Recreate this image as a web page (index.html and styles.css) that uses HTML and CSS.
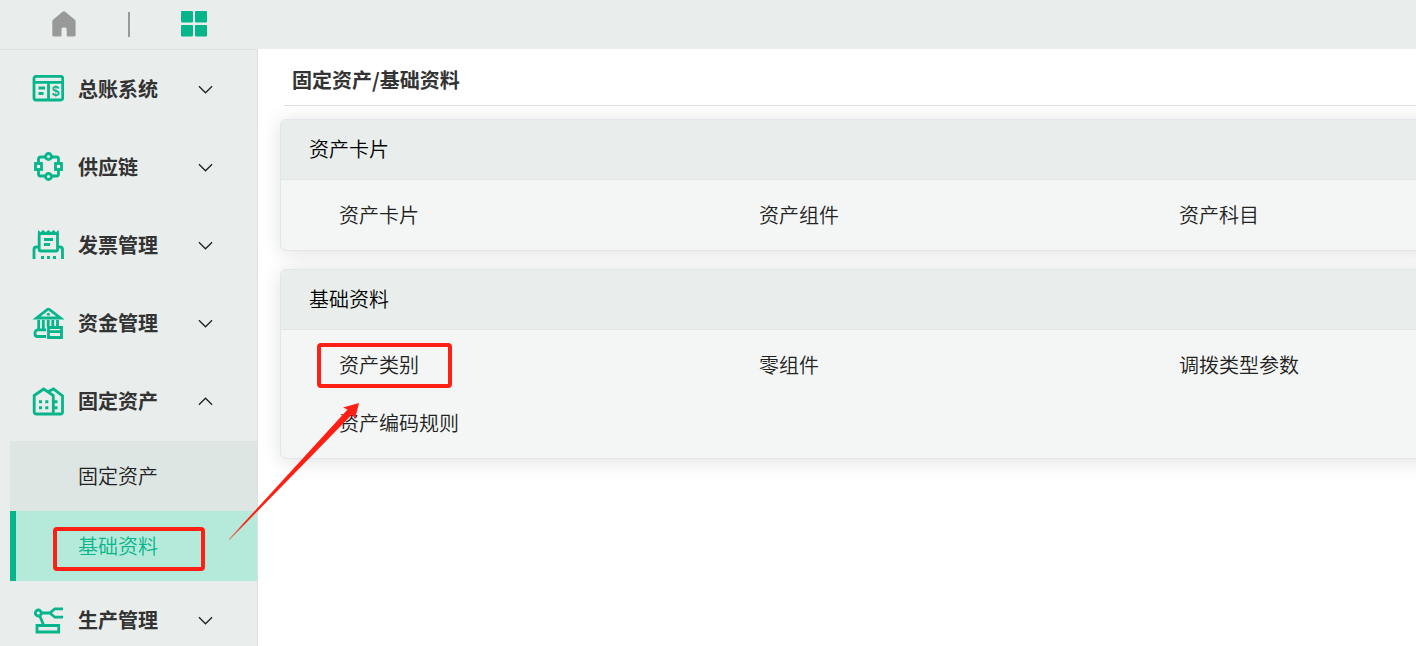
FILE: index.html
```html
<!DOCTYPE html>
<html lang="zh-CN">
<head>
    <meta charset="UTF-8">
    <meta name="viewport" content="width=device-width, initial-scale=1.0">
    <title>固定资产/基础资料</title>
    <link rel="stylesheet" href="styles.css">
</head>
<body>

<header class="topbar">
    <button class="top-btn" aria-label="首页">
        <svg width="26" height="26" viewBox="0 0 26 26"><path fill="#999" d="M11.6 .8a2 2 0 0 1 2.6 0L23.600 8.400a2.500 2.500 0 0 1 1 2V24a1.600 1.600 0 0 1-1.600 1.600H17a1.300 1.300 0 0 1-1.300-1.300V18a1.500 1.500 0 0 0-1.500-1.500h-2.200a1.500 1.500 0 0 0-1.500 1.500v6.300a1.300 1.300 0 0 1-1.300 1.300H2.900A1.600 1.600 0 0 1 1.300 24V10.400a2.500 2.500 0 0 1 1-2z"/></svg>
    </button>
    <span class="divider"></span>
    <button class="top-btn" aria-label="应用">
        <svg width="26" height="26" viewBox="0 0 26 26" fill="#07b58a"><rect width="12" height="11.500" rx="1"/><rect x="14" width="12" height="11.500" rx="1"/><rect y="14" width="12" height="11.500" rx="1"/><rect x="14" y="14" width="12" height="11.500" rx="1"/></svg>
    </button>
</header>

<div class="layout">
    <nav class="sidebar">
        <button class="menu-item">
            <svg class="icon" viewBox="0 0 32 32"><rect x="2" y="3.300" width="28.700" height="23.700" rx="2"/><path d="M2 9.300h29M16.500 9.300V27M6.500 15h6.500M6.500 20.500h5"/><text x="23.700" y="23">$</text></svg>
            <span class="menu-text">总账系统</span>
            <svg class="chevron" viewBox="0 0 16 16"><path d="M1 4.500l7 7 7-7"/></svg>
        </button>
        <button class="menu-item">
            <svg class="icon" viewBox="0 0 32 32"><path d="M13 6H8.500a2 2 0 0 0-2 2v4M20 6h4.500a2 2 0 0 1 2 2v4M6.500 19v4a2 2 0 0 0 2 2H13M26.500 19v4a2 2 0 0 1-2 2H20"/><circle cx="16.500" cy="5.500" r="3"/><circle cx="16.500" cy="25.500" r="3"/><rect x="3.500" y="12.500" width="6" height="6"/><rect x="23.500" y="12.500" width="6" height="6"/></svg>
            <span class="menu-text">供应链</span>
            <svg class="chevron" viewBox="0 0 16 16"><path d="M1 4.500l7 7 7-7"/></svg>
        </button>
        <button class="menu-item">
            <svg class="icon" viewBox="0 0 32 32"><path class="solid" d="M6 1l2.600 2.200L11 1l2.800 2.200L16.300 1l2.700 2.200L21.600 1l2.400 2.200L26.700 1v5H6z"/><path d="M7.200 4v16.500a1.500 1.500 0 0 0 1.500 1.500H24a1.500 1.500 0 0 0 1.500-1.500V4M12 10.500h9M12 15.500h6M7 18H4.500a2.500 2.500 0 0 0-2.500 2.500V30M25.500 18H28a2.500 2.500 0 0 1 2.500 2.500V30M9 28.500h3M15 28.500h3M21 28.500h3"/></svg>
            <span class="menu-text">发票管理</span>
            <svg class="chevron" viewBox="0 0 16 16"><path d="M1 4.500l7 7 7-7"/></svg>
        </button>
        <button class="menu-item">
            <svg class="icon" viewBox="0 0 32 32"><path d="M4.500 11L15.500 2.500a1.500 1.500 0 0 1 1.700 0L28.500 11z"/><circle class="solid" cx="16.400" cy="7.300" r="1.500"/><path d="M6.700 13v9M11.300 13v9M16.200 13v7M20.800 13v6M25.500 13v6M14 22.800H6a3 3 0 0 0-3 3V27a2.500 2.500 0 0 0 2.500 2.500H14"/><path d="M16.500 20.500h13v10h-13zM16.500 24.700h13"/></svg>
            <span class="menu-text">资金管理</span>
            <svg class="chevron" viewBox="0 0 16 16"><path d="M1 4.500l7 7 7-7"/></svg>
        </button>
        <button class="menu-item">
            <svg class="icon" viewBox="0 0 32 32"><path d="M2.200 10.500L11.700 4l9.600 6.500V29H4.200a2 2 0 0 1-2-2zM16.500 6.500L21.500 4l9 7v16a2 2 0 0 1-2 2H21.300"/><path class="solid" d="M7 15.200h3v3H7zM13.300 15.200h3v3h-3zM7 21.200h3v3H7zM13.300 21.200h3v3h-3zM22 15.200h3.500v3H22zM22 21.200h3.500v3H22z"/></svg>
            <span class="menu-text">固定资产</span>
            <svg class="chevron" viewBox="0 0 16 16"><path d="M1 11.500l7-7 7 7"/></svg>
        </button>
        <div class="submenu">
            <a class="sub-item" href="#">固定资产</a>
            <a class="sub-item active" href="#"><span class="marked">基础资料<i class="mark mark-menu"></i></span></a>
        </div>
        <button class="menu-item">
            <svg class="icon" viewBox="0 0 32 32"><circle cx="6.300" cy="9" r="3"/><path d="M9.300 9h8.500l5-4.200H31M17.800 9l5 4.200H31M7.800 12l3.700 9M5 21.500h21.700v6.500H5z"/></svg>
            <span class="menu-text">生产管理</span>
            <svg class="chevron" viewBox="0 0 16 16"><path d="M1 4.500l7 7 7-7"/></svg>
        </button>
    </nav>

    <main class="content">
        <h1 class="page-title">固定资产/基础资料</h1>

        <section class="card">
            <h2 class="card-title">资产卡片</h2>
            <div class="card-body">
                <a href="#">资产卡片</a>
                <a href="#">资产组件</a>
                <a href="#">资产科目</a>
            </div>
        </section>

        <section class="card">
            <h2 class="card-title">基础资料</h2>
            <div class="card-body">
                <a href="#"><span class="marked">资产类别<i class="mark mark-card"></i></span></a>
                <a href="#">零组件</a>
                <a href="#">调拨类型参数</a>
                <a href="#">资产编码规则</a>
            </div>
        </section>
    </main>
</div>

<svg class="arrow" width="132" height="138" viewBox="0 0 132 138">
    <defs>
        <linearGradient id="fade" gradientUnits="userSpaceOnUse" x1="0" y1="137" x2="16" y2="120">
            <stop offset="0" stop-color="#ff2015" stop-opacity=".5"/>
            <stop offset="1" stop-color="#ff2015"/>
        </linearGradient>
    </defs>
    <path fill="url(#fade)" d="M0 136L118.500 6.500 114 4.500 130 0 126 16 123 11.500 .7 136.700z"/>
</svg>

</body>
</html>
```

FILE: styles.css
```css
* {
    box-sizing: border-box;
}
body {
    margin: 0;
    height: 100vh;
    display: flex;
    flex-direction: column;
    overflow: hidden;
    position: relative;
    background: #fff;
    color: #222;
    font-family: "Noto Sans CJK SC", sans-serif;
    font-size: 20px;
    font-weight: 350;
    line-height: 30px;
}
a {
    color: inherit;
    text-decoration: none;
}
button {
    border: none;
    background: none;
    padding: 0;
    color: inherit;
    font: inherit;
    cursor: pointer;
}
.topbar {
    flex: none;
    display: flex;
    align-items: center;
    gap: 51px;
    height: 49px;
    padding: 0 0 1px 51px;
    background: #e9eeec;
}
.top-btn {
    display: flex;
}
.divider {
    width: 2px;
    height: 25px;
    background: #999;
}
.layout {
    flex: 1;
    display: flex;
    min-height: 0;
}

/* sidebar */
.sidebar {
    flex: none;
    width: 258px;
    overflow: hidden;
    background: #e9edec;
    border-top: 1px solid #dce0e1;
    border-right: 1px solid #dcdfe3;
}
.menu-item {
    display: flex;
    align-items: center;
    width: 100%;
    height: 78px;
    padding: 0 44px 0 32px;
    text-align: left;
}
.icon {
    width: 32px;
    height: 32px;
    margin-right: 14px;
    fill: none;
    stroke: #07b58a;
    stroke-width: 2.8;
}
.icon .solid {
    fill: #07b58a;
    stroke: none;
}
.icon text {
    fill: #07b58a;
    stroke: none;
    font: bold 14px "Liberation Sans", sans-serif;
    text-anchor: middle;
}
.menu-text {
    flex: 1;
    color: #333;
    font-weight: 700;
}
.chevron {
    width: 15px;
    height: 15px;
    fill: none;
    stroke: #222;
    stroke-width: 1.4;
}
.submenu {
    margin: 1px 0 0 10px;
    background: #dee6e4;
}
.sub-item {
    display: flex;
    align-items: center;
    height: 70px;
    padding-left: 62px;
    border-left: 6px solid transparent;
}
.sub-item.active {
    color: #07b58a;
    background: #b5eadb;
    border-left-color: #07b58a;
}

/* content */
.content {
    flex: 1;
    min-width: 0;
    padding-left: 22px;
}
.page-title {
    margin: 0 0 13px 4px;
    padding: 16px 8px 10px;
    border-bottom: 1px solid #e0e1e3;
    color: #333;
    font-size: 20px;
    font-weight: 700;
}
.card {
    margin: 0 -20px 18px 0;
    border: 1px solid #e2e5ec;
    border-radius: 6px;
    background: #f4f6f5;
    box-shadow: 0 2px 20px rgba(0, 0, 0, 0.12);
}
.card-title {
    margin: 0;
    padding: 14px 28px 15px;
    border-bottom: 1px solid #e2e5ec;
    border-radius: 6px 6px 0 0;
    background: #e9eeec;
    color: #000;
    font-size: 20px;
    font-weight: 350;
}
.card-body {
    display: grid;
    grid-template-columns: 420fr 420fr 314fr;
    padding: 6px 0;
}
.card-body a {
    padding: 14px 0 14px 58px;
    white-space: nowrap;
}

/* red marks */
.marked {
    position: relative;
}
.mark {
    position: absolute;
    border: 4px solid #ff2015;
    border-radius: 4px;
}
.mark-menu {
    top: -4px;
    left: -25px;
    width: 152px;
    height: 44px;
}
.mark-card {
    top: -7px;
    left: -22px;
    width: 135px;
    height: 45px;
}
.arrow {
    position: absolute;
    top: 403px;
    left: 229px;
    pointer-events: none;
}
```
